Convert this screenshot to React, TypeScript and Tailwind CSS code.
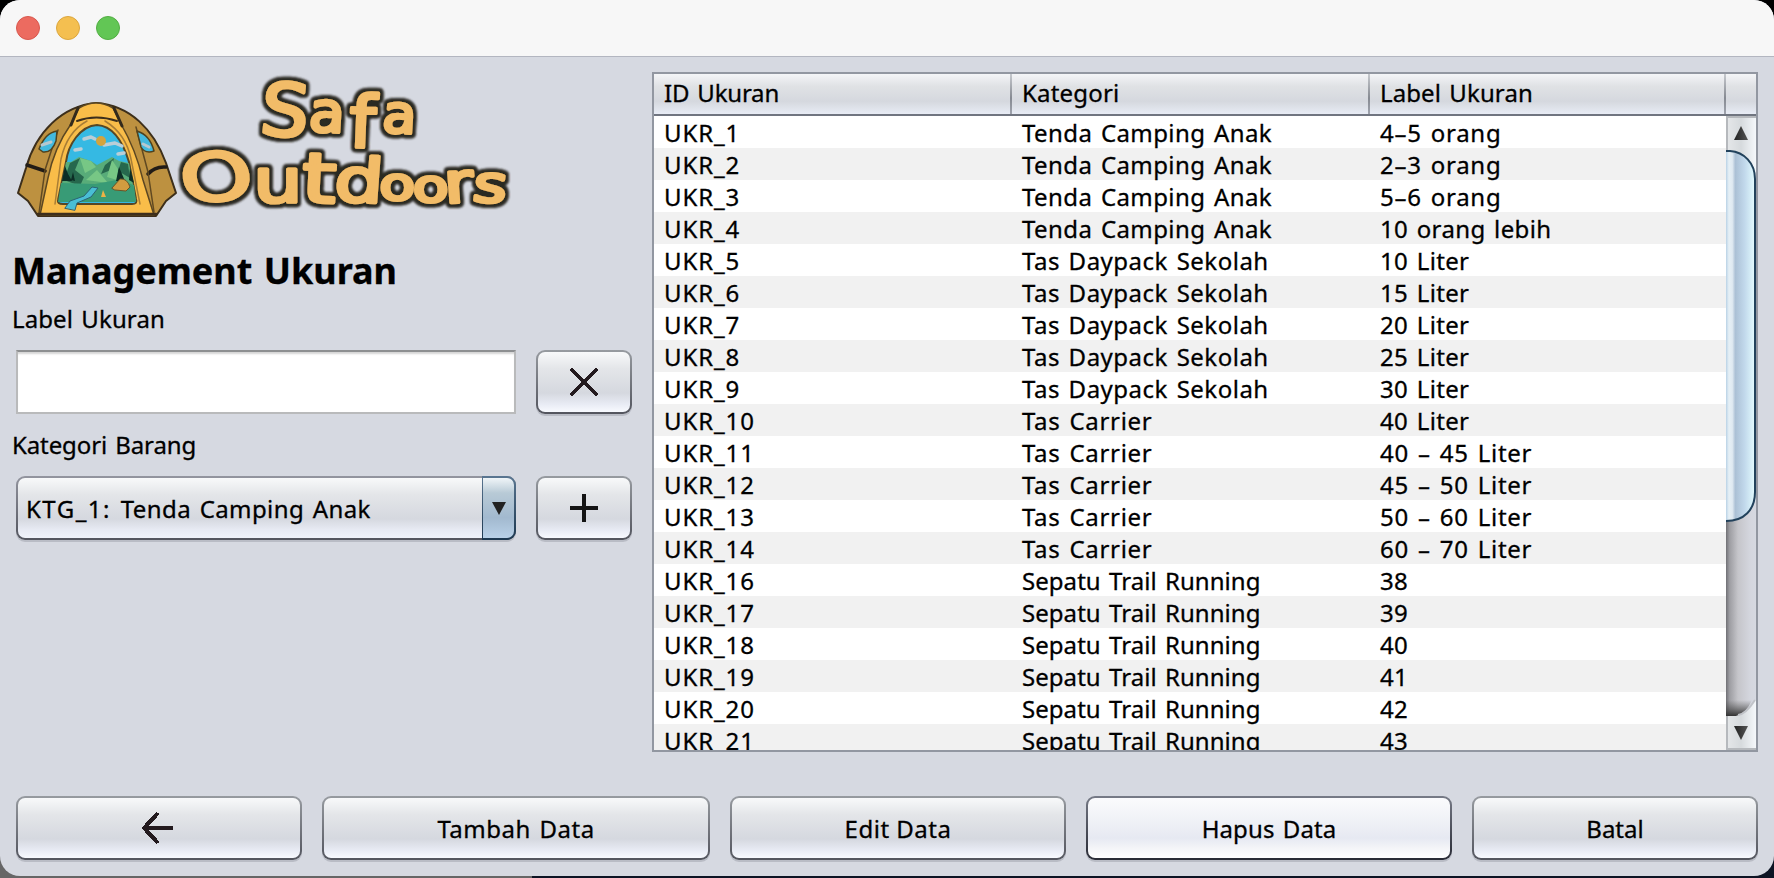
import type { ReactNode } from "react";

type Row = [string, string, string];

const rows: Row[] = [
  ["UKR_1", "Tenda Camping Anak", "4–5 orang"],
  ["UKR_2", "Tenda Camping Anak", "2–3 orang"],
  ["UKR_3", "Tenda Camping Anak", "5–6 orang"],
  ["UKR_4", "Tenda Camping Anak", "10 orang lebih"],
  ["UKR_5", "Tas Daypack Sekolah", "10 Liter"],
  ["UKR_6", "Tas Daypack Sekolah", "15 Liter"],
  ["UKR_7", "Tas Daypack Sekolah", "20 Liter"],
  ["UKR_8", "Tas Daypack Sekolah", "25 Liter"],
  ["UKR_9", "Tas Daypack Sekolah", "30 Liter"],
  ["UKR_10", "Tas Carrier", "40 Liter"],
  ["UKR_11", "Tas Carrier", "40 – 45 Liter"],
  ["UKR_12", "Tas Carrier", "45 – 50 Liter"],
  ["UKR_13", "Tas Carrier", "50 – 60 Liter"],
  ["UKR_14", "Tas Carrier", "60 – 70 Liter"],
  ["UKR_16", "Sepatu Trail Running", "38"],
  ["UKR_17", "Sepatu Trail Running", "39"],
  ["UKR_18", "Sepatu Trail Running", "40"],
  ["UKR_19", "Sepatu Trail Running", "41"],
  ["UKR_20", "Sepatu Trail Running", "42"],
  ["UKR_21", "Sepatu Trail Running", "43"],
];

const categoryTracking: Record<string, string> = {
  "Tenda Camping Anak": "tracking-[0.4px]",
  "Tas Daypack Sekolah": "tracking-[0.5px]",
  "Tas Carrier": "tracking-[0.7px]",
  "Sepatu Trail Running": "tracking-[0.05px]",
};

function Tent() {
  return (
    <g strokeLinejoin="round" strokeLinecap="round">
      <path d="M96 103 C62 106 36 132 26 168 L18 193 L28 201 L38 216 L156 216 L166 201 L176 193 L166 163 C154 130 130 105 96 103Z" fill="#bd9140" stroke="#3c2f1a" strokeWidth="2" />
      <path d="M79 108 Q96 98 113 108 L121 124 Q136 150 143 180 L154 215 L40 215 L48 178 Q54 148 71 124Z" fill="#f9bd49" stroke="#5c4722" strokeWidth="1.5" />
      <path d="M77 121 Q96 114 117 121" fill="none" stroke="#3c2f1a" strokeWidth="2" />
      <path d="M71 125 L78 108 M122 126 L114 108" stroke="#33291a" strokeWidth="3" fill="none" />
      <path d="M87 121 Q67 132 61 159 L55 204 M105 121 Q126 134 131 159 L140 204" stroke="#a87d35" strokeWidth="1.5" fill="none" />
      <path d="M27 165 L45 171 M148 174 Q155 166 166 167" stroke="#211d18" strokeWidth="3.5" fill="none" />
      <path d="M58 130 L45 170 L39 213 M136 127 L148 172 L154 212" stroke="#604920" strokeWidth="1.5" fill="none" />
      <path d="M39 149 Q45 133 57 131 L56 141 Q52 153 43 152Z" fill="#42b9de" stroke="#4f421f" strokeWidth="1.5" />
      <path d="M137 131 Q150 135 154 151 Q145 154 141 147Z" fill="#42b9de" stroke="#4f421f" strokeWidth="1.5" />
      <path d="M42 145 L51 142 M143 144 L149 147" stroke="#b7c8cf" strokeWidth="3" />
      <path d="M97 125 C80 126 68 145 66 162 L58 200 Q57 204 63 204 L132 204 Q138 204 136 199 L129 162 C123 142 113 126 97 125Z" fill="#36b9e3" stroke="#574725" strokeWidth="2" />
      <path d="M66 162 L71 162 L79 157 L91 161 L97 165 L112 157 L119 161 L129 163 L136 201 L59 201 L63 178Z" fill="#59ac79" />
      <path d="M70 163 L80 158 L75 170 L84 177 L80 186 L64 180Z M105 165 L114 158 L111 170 L101 174Z M121 162 L128 164 L130 178 L118 171Z" fill="#28684d" />
      <path d="M80 158 L91 161 L96 167 L85 173Z M112 160 L118 169 L117 180 L107 177Z M86 180 L97 170 L108 183Z" fill="#77c785" />
      <path d="M61 183 L95 184 L117 180 L134 185 L136 202 L58 202Z" fill="#379b76" />
      <path d="M62 181 L65 166 L68 174 L72 181Z M71 180 L73 172 L75 181Z M116 181 L119 167 L125 181Z M129 180 L130 168 L134 183Z" fill="#082e25" />
      <path d="M65 208 L70 201 L84 196 L92 187 L98 188 L91 197 L77 203 L75 210Z" fill="#4abed5" stroke="#2b6374" strokeWidth="1" />
      <path d="M84 139 L91 137 L95 139 M75 150 L81 149 M104 145 L115 143 L122 146 M118 154 L124 153" stroke="#b9ced7" strokeWidth="3.5" fill="none" />
      <circle cx="101" cy="141" r="5" fill="#d4a43e" />
      <path d="M112 188 L120 179 Q127 178 130 187 L126 191 L115 190Z" fill="#d29c40" stroke="#6b5426" strokeWidth="1" />
      <path d="M101 197 L103 190 L106 197Z" fill="#edb244" />
      <path d="M38 214 L156 214" stroke="#3c2f1a" strokeWidth="2.5" />
    </g>
  );
}

function Logo() {
  return (
    <svg className="block h-[174px] w-[540px]" viewBox="0 57 540 174" fontFamily="'DejaVu Sans Condensed', 'DejaVu Sans', sans-serif">
      <defs>
        <filter id="ink" x="-10%" y="-20%" width="120%" height="140%">
          <feGaussianBlur in="SourceAlpha" stdDeviation="1.6" result="round" />
          <feComponentTransfer in="round" result="blob">
            <feFuncA type="linear" slope="12" intercept="-1" />
          </feComponentTransfer>
          <feMorphology in="blob" operator="dilate" radius="1.6" result="fat" />
          <feGaussianBlur in="fat" stdDeviation="0.9" result="soft" />
          <feFlood floodColor="#2c2a24" />
          <feComposite in2="soft" operator="in" result="line" />
          <feGaussianBlur in="SourceGraphic" stdDeviation="0.6" result="face" />
          <feMerge>
            <feMergeNode in="line" />
            <feMergeNode in="face" />
          </feMerge>
        </filter>
        <filter id="soften">
          <feGaussianBlur stdDeviation="0.7" />
        </filter>
      </defs>
      <g filter="url(#soften)">
        <Tent />
      </g>
      <g filter="url(#ink)" fill="#f2bc68" stroke="#f2bc68" strokeWidth="3.2" strokeLinejoin="round">
        <text transform="scale(1.15 1)" x="225 268 303 332" y="134 131 147 132" rotate="5 3 2 3">
          <tspan fontSize="73">S</tspan><tspan fontSize="56">a</tspan><tspan fontSize="72">f</tspan><tspan fontSize="53">a</tspan>
        </text>
        <text transform="scale(1.4 1)" x="131 181 215 238 271 295 318 337" y="203 202 202 201 200 202 203 201" rotate="-6 0 2 3 0 0 -3 5">
          <tspan fontSize="66" fontFamily="'DejaVu Sans', sans-serif">O</tspan><tspan fontSize="61">u</tspan><tspan fontSize="69">t</tspan><tspan fontSize="61">d</tspan><tspan fontSize="46">o</tspan><tspan fontSize="46">o</tspan><tspan fontSize="56">r</tspan><tspan fontSize="51">s</tspan>
        </text>
      </g>
    </svg>
  );
}

function Button({ children, className, hot = false }: { children: ReactNode; className: string; hot?: boolean }) {
  return (
    <button
      className={`h-16 rounded-[9px] p-[2px] shadow-[0_2px_0_#b9bcc5] ${
        hot ? "bg-linear-to-b from-[#777b87] to-[#292b35]" : "bg-linear-to-b from-[#979ba0] to-[#53555e]"
      } ${className}`}
    >
      <span
        className={`flex h-full w-full items-center justify-center rounded-[7px] pt-px ${
          hot
            ? "bg-[linear-gradient(#fbfbfd,#eff1f6_40%,#e6e9f2_67%,#f4f5f8_84%,#ffffff)]"
            : "bg-[linear-gradient(#f8f9fa,#e4e6e9_27%,#d5d8df_68%,#e7eaf3_86%,#f8faff)]"
        }`}
      >
        {children}
      </span>
    </button>
  );
}

function HeaderCell({ children, className }: { children: ReactNode; className: string }) {
  return <div className={`flex h-[38px] items-center pl-[10px] ${className}`}>{children}</div>;
}

const Divider = () => <div className="h-10 w-[2px] shrink-0 bg-[linear-gradient(#c6c9ce,#868a92_60%,#9fa3ad)]" />;

function Scrollbar() {
  return (
    <svg className="block h-[634px] w-[30px] shrink-0" viewBox="0 0 30 634">
      <defs>
        <linearGradient id="track">
          <stop offset="0" stopColor="#707075" />
          <stop offset="0.12" stopColor="#9d9da2" />
          <stop offset="0.4" stopColor="#c5c5ca" />
          <stop offset="0.8" stopColor="#d4d6de" />
          <stop offset="1" stopColor="#d6d9e1" />
        </linearGradient>
        <linearGradient id="thumb">
          <stop offset="0" stopColor="#b9d2e6" />
          <stop offset="0.1" stopColor="#e6f0f6" />
          <stop offset="0.22" stopColor="#dfe9f1" />
          <stop offset="0.32" stopColor="#abc0d5" />
          <stop offset="0.65" stopColor="#c2d9ec" />
          <stop offset="1" stopColor="#e3fcff" />
        </linearGradient>
        <linearGradient id="cap">
          <stop offset="0" stopColor="#e6e8ea" />
          <stop offset="0.5" stopColor="#d6dadd" />
          <stop offset="1" stopColor="#f5f8fb" />
        </linearGradient>
        <linearGradient id="edge" x2="0" y2="1">
          <stop offset="0" stopColor="#555" stopOpacity="0" />
          <stop offset="1" stopColor="#333" />
        </linearGradient>
        <linearGradient id="arrow">
          <stop offset="0" stopColor="#222" />
          <stop offset="1" stopColor="#555" />
        </linearGradient>
      </defs>
      <rect width="30" height="634" fill="url(#track)" />
      <path d="M0 0H30V62C29 44 16 35 0 35Z" fill="url(#cap)" />
      <path d="M0 1H30M1 0V34" stroke="#b6b9bd" strokeWidth="2" />
      <path d="M15 10L22 24H8Z" fill="url(#arrow)" />
      <path d="M0 35H4C18 36 29 47 29 63V376C29 394 18 405 0 405Z" fill="url(#thumb)" />
      <path d="M0 35H4C18 36 29 47 29 63V376C29 394 18 405 0 405" fill="none" stroke="#22425c" strokeWidth="2" />
      <path d="M0 584H26Q20 598 10 600H0Z" fill="url(#edge)" />
      <path d="M0 600H10C20 600 25 588 30 584V634H0Z" fill="url(#cap)" />
      <path d="M12 599Q20 598 29 584" stroke="#c0c3c8" strokeWidth="2" fill="none" />
      <path d="M0 633H30M1 600V634" stroke="#b6b9bd" strokeWidth="2" />
      <path d="M8 610H22L15 624Z" fill="url(#arrow)" />
    </svg>
  );
}

export default function App() {
  return (
    <div className="h-[878px] w-[1774px] overflow-hidden bg-[linear-gradient(#000_400px,transparent_400px),linear-gradient(90deg,#666_532px,#0d1424_532px)] font-['Noto_Sans',sans-serif] text-[24px] leading-8 text-black [-webkit-text-stroke:0.3px_black] [word-spacing:2px]">
      <div className="flex h-[876px] flex-col overflow-hidden rounded-[20px] bg-[#d6d9e1]">
        <header className="flex h-[57px] shrink-0 items-center gap-4 border-b border-[#b3b6c0] bg-[#f7f7f7] pl-4">
          <span className="size-6 rounded-full border border-[#d8584e] bg-[#ec6b60]" />
          <span className="size-6 rounded-full border border-[#dba63e] bg-[#f4bf50]" />
          <span className="size-6 rounded-full border border-[#52ae43] bg-[#62c655]" />
        </header>

        <div className="flex h-[739px] shrink-0">
          <section className="flex w-[652px] flex-col">
            <div className="h-[174px] [-webkit-text-stroke:initial] [word-spacing:0]">
              <Logo />
            </div>
            <h1 className="mt-[16px] ml-[12px] h-12 text-[36px] leading-[48px] font-bold tracking-[0px]">Management Ukuran</h1>
            <label className="mt-[8px] ml-[12px] h-8 tracking-[0.1px]">Label Ukuran</label>
            <div className="mt-[15px] ml-4 flex gap-5">
              <div className="h-16 w-[500px] border-2 border-[#b9babb] border-t-[#8d8f91] bg-white shadow-[inset_0_3px_2px_-1px_#d5d5d5]" />
              <Button className="w-24">
                <svg className="mb-px size-7" viewBox="0 0 28 28" shapeRendering="crispEdges">
                  <path d="M2 2L26 26M26 2L2 26" stroke="#231a1e" strokeWidth="4" strokeLinecap="square" />
                </svg>
              </Button>
            </div>
            <label className="mt-[15px] ml-[12px] h-8 tracking-[-0.1px]">Kategori Barang</label>
            <div className="mt-[15px] ml-4 flex gap-5">
              <div className="flex h-16 w-[500px] overflow-hidden rounded-[9px] bg-linear-to-b from-[#93959f] to-[#53555e] shadow-[0_2px_0_#b9bcc5]">
                <div className="my-[2px] ml-[2px] flex w-[464px] items-center rounded-l-[7px] bg-[linear-gradient(#f8f9fa,#e4e6e9_27%,#d5d8df_68%,#e7eaf3_86%,#f0f3fa)] pt-[2px] pl-2 tracking-[0.4px]">
                  <span>
                    <span className="tracking-[1.5px]">KTG_1: </span>
                    Tenda Camping Anak
                  </span>
                </div>
                <div className="flex w-[34px] bg-linear-to-b from-[#5a7691] to-[#1d3850] py-[2px] pr-[2px] pl-px">
                  <div className="flex w-full items-center justify-center rounded-r-[7px] bg-[linear-gradient(#f0f5f8,#b8cad6_25%,#a2b9cf_66%,#b9d1e8)]">
                    <svg className="h-[13px] w-[14px]" viewBox="0 0 14 13">
                      <path d="M0 0H14L7 13Z" fill="#222" />
                    </svg>
                  </div>
                </div>
              </div>
              <Button className="w-24">
                <svg className="mb-px size-7" viewBox="0 0 28 28">
                  <path d="M14 0V28M0 14H28" stroke="#141414" strokeWidth="4" />
                </svg>
              </Button>
            </div>
          </section>

          <section className="mt-[15px] flex h-[680px] w-[1106px] flex-col border-2 border-[#9297a1]">
            <div className="flex h-[42px] shrink-0 border-b-2 border-[#707580] bg-[linear-gradient(#f4f5f7,#e0e2e5_30%,#d5d8de_68%,#e8ecf5)]">
              <HeaderCell className="w-[356px] tracking-[-0.2px]">ID Ukuran</HeaderCell>
              <Divider />
              <HeaderCell className="w-[356px] tracking-[0.2px]">Kategori</HeaderCell>
              <Divider />
              <HeaderCell className="w-[354px] tracking-[0.1px]">Label Ukuran</HeaderCell>
              <Divider />
            </div>
            <div className="flex h-[634px]">
              <div className="w-[1072px] overflow-hidden bg-white">
                {rows.map(([id, category, label]) => (
                  <div key={id} className="grid h-8 grid-cols-[358px_358px_356px] pt-px pl-[10px] even:bg-[#f1f1f1]">
                    <span className="tracking-[0.9px]">{id}</span>
                    <span className={categoryTracking[category]}>{category}</span>
                    <span className={label.includes("–") ? "tracking-[0.75px]" : "tracking-[0.35px]"}>{label}</span>
                  </div>
                ))}
              </div>
              <Scrollbar />
            </div>
          </section>
        </div>

        <footer className="flex shrink-0 gap-5 px-4 tracking-[0.5px]">
          <Button className="w-[286px]">
            <svg className="mr-[4px] mb-px size-8" viewBox="0 0 32 32" shapeRendering="crispEdges">
              <path d="M17 1L3 16L17 31M3 16H32" fill="none" stroke="#231a1e" strokeWidth="4" />
            </svg>
          </Button>
          <Button className="w-[388px] [word-spacing:2px]">Tambah Data</Button>
          <Button className="w-[336px]">Edit Data</Button>
          <Button className="w-[366px] tracking-[0.1px] [word-spacing:2px]" hot>Hapus Data</Button>
          <Button className="w-[286px] tracking-[0px]">Batal</Button>
        </footer>
      </div>
    </div>
  );
}
